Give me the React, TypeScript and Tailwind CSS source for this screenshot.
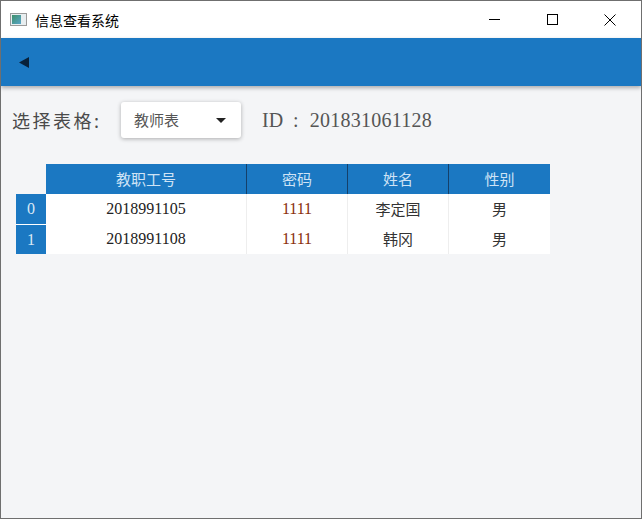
import React from 'react'

const serif = { fontFamily: '"Liberation Serif", "Noto Sans CJK SC", serif' }

const rows = [
  { id: '2018991105', pwd: '1111', name: '李定国', sex: '男' },
  { id: '2018991108', pwd: '1111', name: '韩冈', sex: '男' },
]

const cols = [
  { title: '教职工号', w: 'w-[201px]' },
  { title: '密码', w: 'w-[101px]' },
  { title: '姓名', w: 'w-[101px]' },
  { title: '性别', w: 'w-[101px]' },
]

export default function App() {
  return (
    <div
      className="w-[642px] h-[519px] border border-[#6f6f6f] flex flex-col overflow-hidden bg-[#f4f5f7]"
      style={{ fontFamily: '"Noto Sans CJK SC", "Noto Sans", sans-serif' }}
    >
      {/* title bar */}
      <div className="h-[37px] bg-white flex items-center shrink-0">
        <div className="ml-[9px] w-[17px] h-[13px] border border-[#9a9a9a] bg-[#e8eef0] flex items-stretch p-[1px]">
          <div className="w-[9px] bg-gradient-to-br from-[#3f8f6a] to-[#5aa5c8]" />
        </div>
        <span className="ml-[8px] text-[14px] text-black leading-none">信息查看系统</span>
        <div className="ml-auto mr-[2px] flex items-center h-full">
          <div className="w-[58px] h-full flex items-center justify-center">
            <div className="w-[11px] h-px bg-black" />
          </div>
          <div className="w-[58px] h-full flex items-center justify-center">
            <div className="w-[11px] h-[11px] border border-black" />
          </div>
          <div className="w-[58px] h-full flex items-center justify-center">
            <svg width="12" height="12" viewBox="0 0 12 12">
              <path d="M0.5 0.5 L11.5 11.5 M11.5 0.5 L0.5 11.5" stroke="#000" strokeWidth="1" />
            </svg>
          </div>
        </div>
      </div>

      {/* app bar */}
      <div className="h-[48px] bg-[#1b78c2] shrink-0 flex items-center pl-[18px] shadow-[0_2px_4px_rgba(0,0,0,0.3)] relative z-10">
        <svg width="10" height="11" viewBox="0 0 10 11">
          <path d="M10 0 L0 5.5 L10 11 Z" fill="#08213a" />
        </svg>
      </div>

      {/* content */}
      <div className="flex-1 flex flex-col">
        <div className="flex items-center pt-[16px] pl-[11px]">
          <span className="w-[109px] text-[18px] text-[#4a4a4a] tracking-[2.5px]">选择表格:</span>
          <div className="w-[120px] h-[36px] bg-white rounded-[3px] shadow-[0_1px_4px_rgba(0,0,0,0.3)] flex items-center pl-[13px] pr-[15px]">
            <span className="text-[15px] text-[#555]">教师表</span>
            <svg className="ml-auto" width="10" height="5" viewBox="0 0 10 5">
              <path d="M0 0 L10 0 L5 5 Z" fill="#222" />
            </svg>
          </div>
          <div className="ml-[21px] flex items-center text-[20px] text-[#555]" style={serif}>
            <span>ID</span>
            <span className="ml-[10px]">:</span>
            <span className="ml-[11px] tracking-[0.25px]">201831061128</span>
          </div>
        </div>

        <div className="mt-[26px] ml-[15px] flex flex-col self-start">
          {/* header */}
          <div className="flex h-[30px]">
            <div className="w-[30px]" />
            {cols.map((c, i) => (
              <div
                key={c.title}
                className={`${c.w} bg-[#1b78c2] flex items-center justify-center text-[15px] text-[#cfe3f5] ${i < cols.length - 1 ? 'border-r border-[#15406a]' : ''}`}
              >
                {c.title}
              </div>
            ))}
          </div>
          {rows.map((r, ri) => (
            <div key={r.id} className="flex h-[30px]">
              <div
                className={`w-[30px] bg-[#1b78c2] flex items-center justify-center text-[16px] text-[#d9e8f5] ${ri > 0 ? 'border-t border-white' : ''}`}
                style={serif}
              >
                {ri}
              </div>
              <div className="w-[201px] bg-white border-r border-[#eeeeee] flex items-center justify-center text-[16px] text-[#222]" style={serif}>
                {r.id}
              </div>
              <div className="w-[101px] bg-white border-r border-[#eeeeee] flex items-center justify-center text-[16px] text-[#8a2e0c]" style={serif}>
                {r.pwd}
              </div>
              <div className="w-[101px] bg-white border-r border-[#eeeeee] flex items-center justify-center text-[15px] text-[#333]">
                {r.name}
              </div>
              <div className="w-[101px] bg-white flex items-center justify-center text-[15px] text-[#333]">
                {r.sex}
              </div>
            </div>
          ))}
        </div>
      </div>
    </div>
  )
}
